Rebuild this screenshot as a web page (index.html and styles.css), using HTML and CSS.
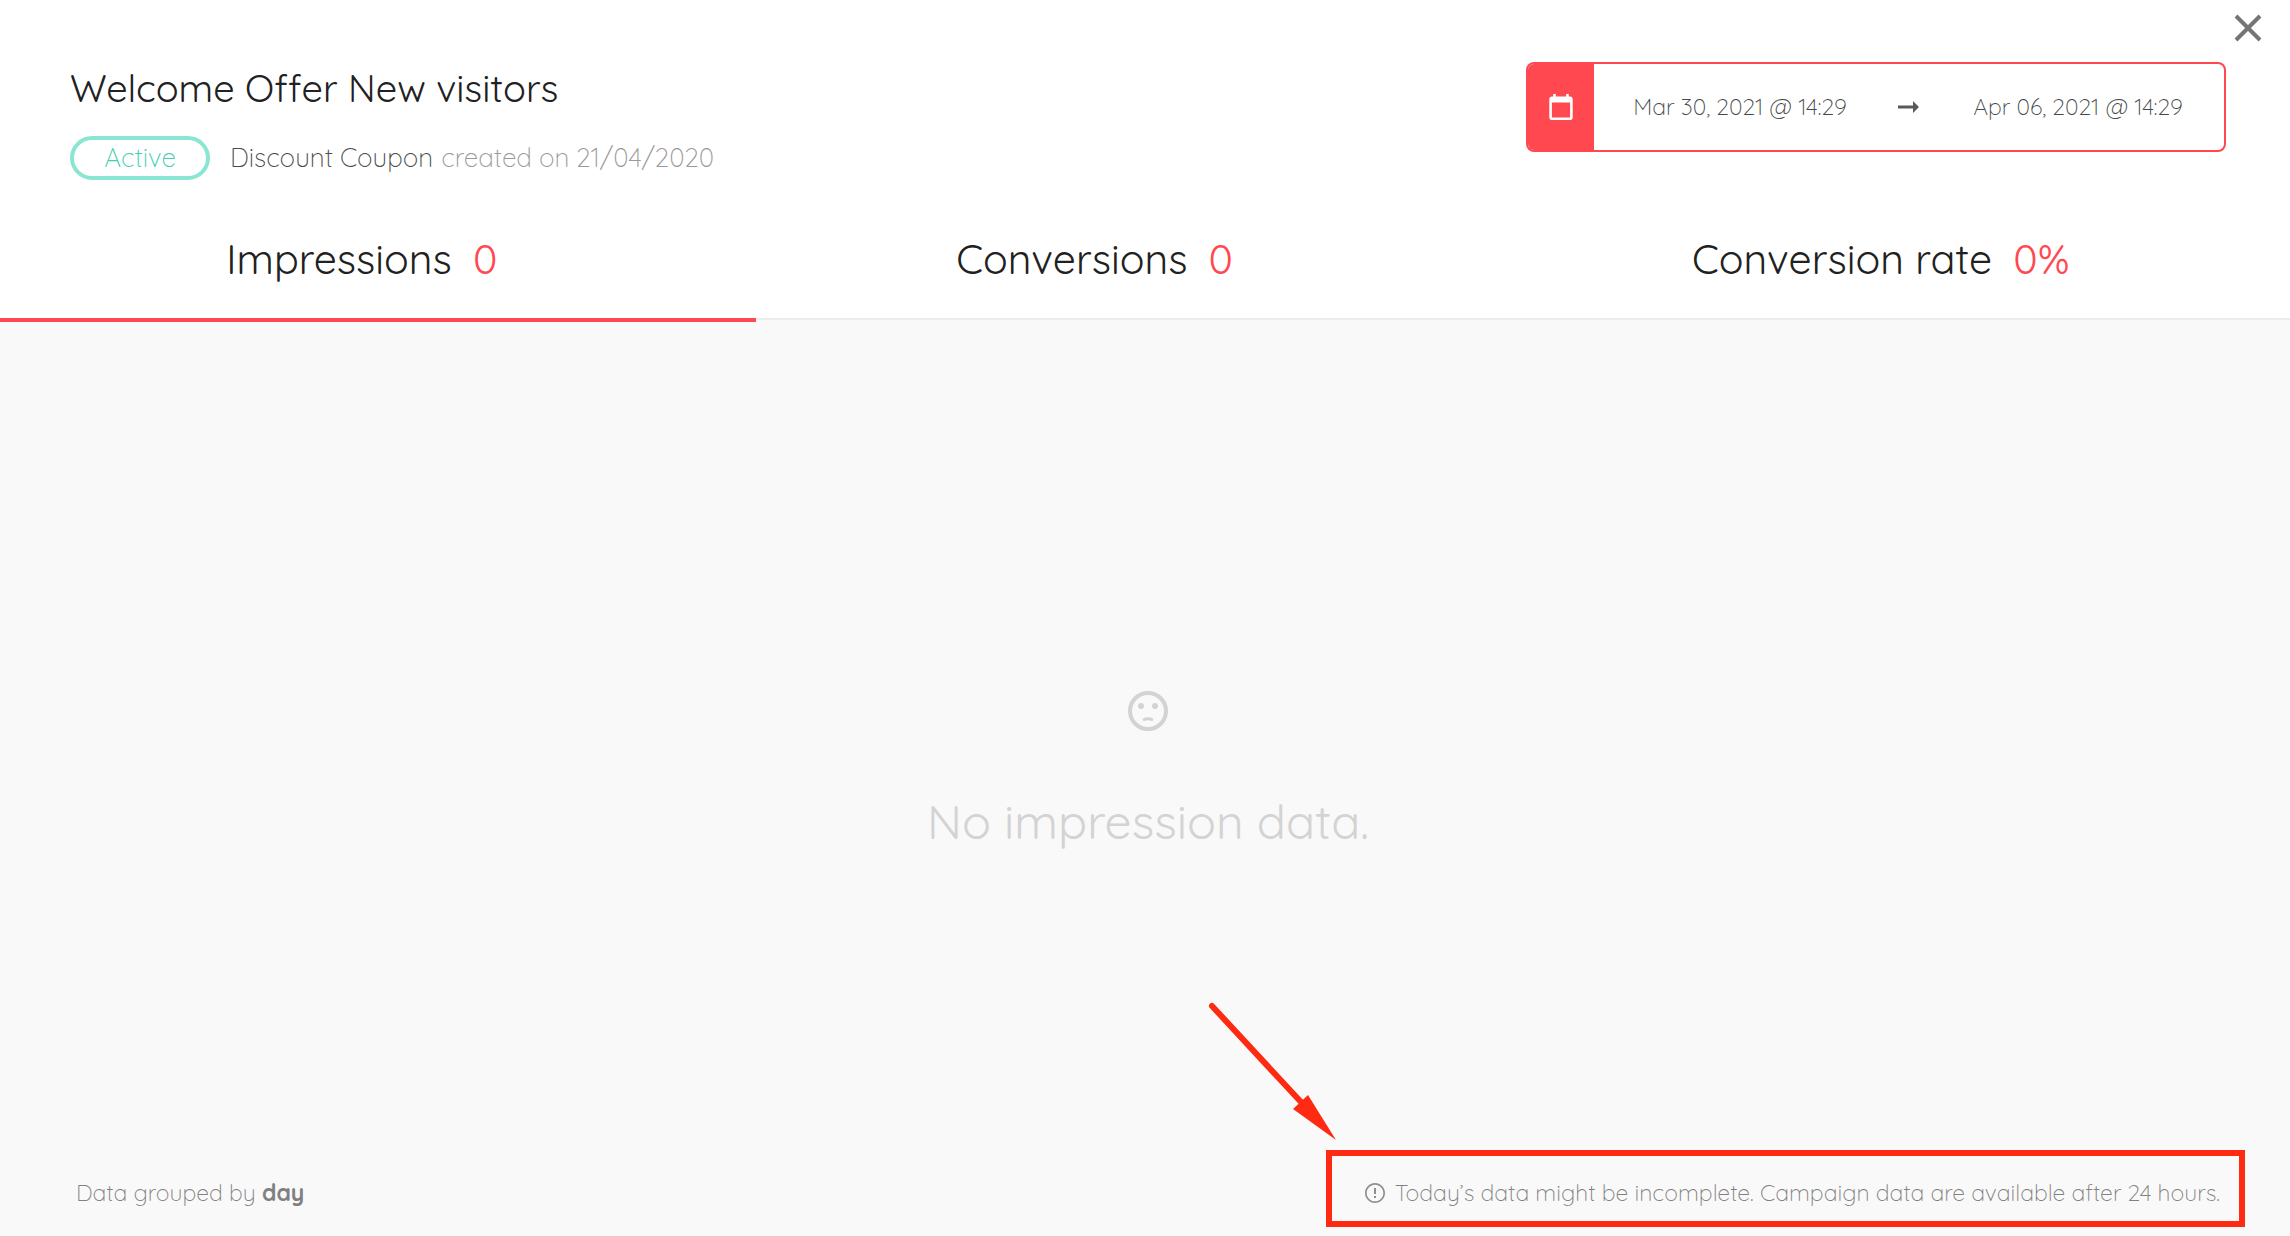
FILE: index.html
```html
<!DOCTYPE html>
<html lang="en">
<head>
    <meta charset="UTF-8">
    <meta name="viewport" content="width=device-width, initial-scale=1.0">
    <title>Welcome Offer New visitors</title>
    <link rel="stylesheet" href="styles.css">
</head>
<body>
    <div class="page">
        <button class="close" type="button" aria-label="Close">
            <svg viewBox="0 0 28 28" width="28" height="28"><path d="M2 2L26 26M26 2L2 26" stroke="#757575" stroke-width="4" fill="none"/></svg>
        </button>

        <header class="header">
            <div class="campaign">
                <h1>Welcome Offer New visitors</h1>
                <div class="meta">
                    <span class="badge">Active</span>
                    <span class="type">Discount Coupon</span>
                    <span class="created">created on 21/04/2020</span>
                </div>
            </div>
            <div class="date-range">
                <button class="calendar" type="button" aria-label="Choose dates">
                    <svg viewBox="3 1 18 20" width="24" height="26"><path fill="#fff" d="M19 3h-1V1h-2v2H8V1H6v2H5c-1.100 0-2 .9-2 2v14c0 1.100.9 2 2 2h14c1.100 0 2-.9 2-2V5c0-1.100-.9-2-2-2zm0 16H5V7.500h14V19z"/></svg>
                </button>
                <input class="date" type="text" aria-label="Start date" value="Mar 30, 2021 @ 14:29">
                <svg class="to" viewBox="0 0 22 14" width="22" height="14"><path fill="#565a5c" d="M0 5.500h15V1l6 6-6 6V8.500H0z"/></svg>
                <input class="date" type="text" aria-label="End date" value="Apr 06, 2021 @ 14:29">
            </div>
        </header>

        <nav class="tabs">
            <button class="tab active" type="button">Impressions <span>0</span></button>
            <button class="tab" type="button">Conversions <span>0</span></button>
            <button class="tab last" type="button">Conversion rate <span>0%</span></button>
        </nav>

        <main class="empty">
            <svg viewBox="0 0 40 40" width="40" height="40">
                <circle cx="20" cy="20" r="18" fill="none" stroke="#d3d3d3" stroke-width="4"/>
                <circle cx="13" cy="15" r="3" fill="#d3d3d3"/>
                <circle cx="27" cy="15" r="3" fill="#d3d3d3"/>
                <path d="M15 29Q20 26.500 25 29" fill="none" stroke="#d3d3d3" stroke-width="3"/>
            </svg>
            <p>No impression data.</p>
        </main>

        <footer class="footer">
            <p class="grouping">Data grouped by <b>day</b></p>
            <div class="note">
                <!-- arrow pointing at the note -->
                <svg class="arrow" viewBox="0 0 130 140" width="130" height="140">
                    <path d="M6 6L95 102" stroke="#ff2a12" stroke-width="6" stroke-linecap="round"/>
                    <path d="M102 95L87 109L130 140z" fill="#ff2a12"/>
                </svg>
                <svg viewBox="2 2 20 20" width="20" height="20"><path fill="#8f8f8f" d="M11 15h2v2h-2zm0-8h2v6h-2zM12 2C6.480 2 2 6.480 2 12s4.480 10 10 10 10-4.480 10-10S17.520 2 12 2zm0 18.300c-4.600 0-8.300-3.700-8.300-8.300S7.400 3.700 12 3.700s8.300 3.700 8.300 8.300-3.700 8.300-8.300 8.300z"/></svg>
                <p>Today’s data might be incomplete. Campaign data are available after 24 hours.</p>
            </div>
        </footer>
    </div>
</body>
</html>
```
FILE: styles.css
```css
* {
    box-sizing: border-box;
}
body {
    margin: 0;
    font-family: Quicksand, Lato, sans-serif;
    font-weight: 400;
    background-color: #fff;
    color: #212121;
}
h1, p {
    margin: 0;
    font-weight: inherit;
}
button, input {
    font: inherit;
    color: inherit;
    background: none;
    border: none;
    padding: 0;
}
button {
    cursor: pointer;
}
svg {
    display: block;
    flex-shrink: 0;
}
.page {
    position: relative;
    min-height: 100vh;
    display: flex;
    flex-direction: column;
}
.close {
    position: absolute;
    top: 14px;
    right: 28px;
}
.header {
    display: flex;
    justify-content: space-between;
    align-items: flex-start;
    padding: 62px 64px 0 70px;
}
h1 {
    font-size: 38px;
    line-height: 52px;
}
.meta {
    display: flex;
    align-items: center;
    margin-top: 22px;
    font-size: 26px;
    font-weight: 300;
    line-height: 36px;
}
.badge {
    width: 140px;
    border: 4px solid #8ae6d2;
    border-radius: 22px;
    color: #3fd0b0;
    text-align: center;
}
.type {
    margin-left: 20px;
    color: #4c4c4c;
}
.created {
    margin-left: 8px;
    color: #9a9a9a;
}
.date-range {
    display: flex;
    align-items: center;
    width: 700px;
    height: 90px;
    border: 2px solid #ff4850;
    border-radius: 8px;
    color: #45494b;
    font-size: 23px;
    font-weight: 300;
    overflow: hidden;
}
.calendar {
    display: flex;
    align-items: center;
    justify-content: center;
    width: 66px;
    height: 100%;
    background-color: #ff4850;
}
.date {
    flex: 1;
    min-width: 0;
    padding-bottom: 2px;
    text-align: center;
}
.to {
    margin: 0 12px;
}
.tabs {
    position: relative;
    display: flex;
    margin-top: 30px;
    border-bottom: 2px solid #ececec;
}
.tab {
    width: 31%;
    height: 112px;
    margin-bottom: -4px;
    padding-right: 32px;
    padding-bottom: 12px;
    border-bottom: 4px solid transparent;
    font-size: 41px;
}
.tab span {
    margin-left: 10px;
    color: #ff4850;
}
.tab.active {
    width: 33%;
    border-bottom-color: #ff4850;
}
.tab.last {
    flex: 1;
    padding-left: 6px;
    padding-right: 0;
}
.empty {
    flex: 1;
    display: flex;
    flex-direction: column;
    align-items: center;
    justify-content: center;
    gap: 60px;
    padding: 72px 0 0 6px;
    background-color: #f9f9f9;
    color: #d3d3d3;
    font-size: 48px;
    line-height: 60px;
}
.footer {
    display: flex;
    justify-content: space-between;
    align-items: center;
    padding: 0 45px 9px 76px;
    background-color: #f9f9f9;
    color: #808080;
    font-size: 23px;
    font-weight: 300;
    line-height: 30px;
}
.footer b {
    font-weight: 700;
}
.grouping {
    padding-top: 8px;
}
.note {
    position: relative;
    display: flex;
    align-items: center;
    gap: 10px;
    height: 77px;
    padding: 8px 19px 0 33px;
    border: 6px solid #ff2a12;
}
.arrow {
    position: absolute;
    left: -126px;
    top: -156px;
}
```
